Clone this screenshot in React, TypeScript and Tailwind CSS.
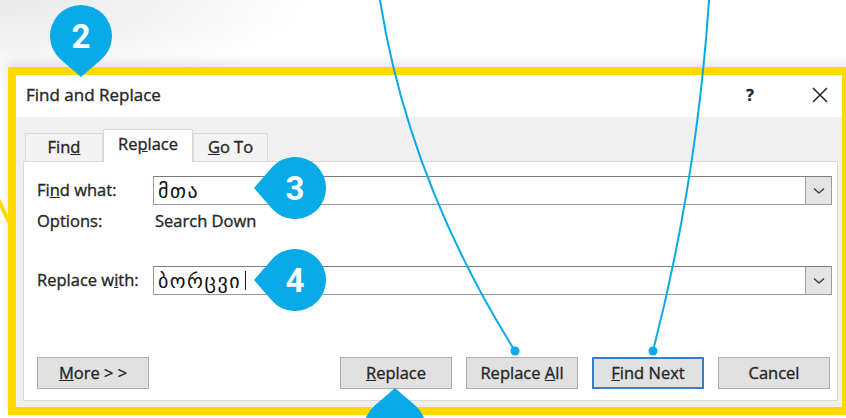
import React from "react";

const BLUE = "#0aaae8";

// Teardrop marker; circle centre at (cx, cy), tip pointing `dir`
function Pin({ cx, cy, dir, n }: { cx: number; cy: number; dir: "down" | "left" | "up"; n: string }) {
    const rot = dir === "down" ? 0 : dir === "left" ? 90 : 180;
    return (
        <div className="absolute" style={{ left: cx - 44, top: cy - 44, width: 88, height: 88 }}>
            <svg width="88" height="88" viewBox="-44 -44 88 88" className="absolute inset-0">
                <path d="M0 41 L20.3 23.4 A31 31 0 1 0 -20.3 23.4 Z" fill={BLUE} transform={`rotate(${rot})`} />
            </svg>
            <span className="absolute inset-0 flex items-center justify-center text-white text-[33px] font-bold leading-none font-['Roboto',sans-serif]">
                {n}
            </span>
        </div>
    );
}

function Combo({ children }: { children: React.ReactNode }) {
    return (
        <div className="flex-1 h-[29px] flex border border-[#9b9b9b] border-t-[#7f7f7f] bg-white">
            <div className="flex-1 flex items-center pl-[4px] text-[20px] tracking-[1.5px] text-[#111] [-webkit-text-stroke:0px] font-['DejaVu_Sans',sans-serif]">
                {children}
            </div>
            <div className="w-[26px] flex items-center justify-center bg-[#e4e4e4] border-l border-[#a3a3a3]">
                <svg width="12" height="8" viewBox="0 0 12 8">
                    <path d="M1 1.5 L6 6 L11 1.5" fill="none" stroke="#444" strokeWidth="1.6" />
                </svg>
            </div>
        </div>
    );
}

function Btn({ children, primary }: { children: React.ReactNode; primary?: boolean }) {
    return (
        <button
            className={
                "h-[32px] w-[112px] flex items-center justify-center bg-[#e1e1e1] text-[16.5px] text-[#262626] [-webkit-text-stroke:0.35px_#262626] " +
                (primary ? "border-2 border-[#3b7dc9]" : "border border-[#adadad]")
            }
        >
            {children}
        </button>
    );
}

export default function App() {
    return (
        <div className="relative w-[846px] h-[418px] overflow-hidden bg-white font-['Open_Sans','DejaVu_Sans',sans-serif]">
            <div className="absolute left-0 top-0 w-[320px] h-[90px] bg-[radial-gradient(ellipse_at_top_left,#e9e9e9,transparent_70%)]" />

            <div className="relative pt-[67px] pl-[8px]">
                <div className="w-[842px] border-8 border-[#ffd900] shadow-[0_-4px_10px_rgba(0,0,0,0.10)]">
                    {/* title bar */}
                    <div className="h-[42px] bg-white flex items-center pl-[10px] pb-[3px] text-[17px] text-[#262626] [-webkit-text-stroke:0.35px_#262626]">
                        <span className="flex-1">Find and Replace</span>
                        <span className="w-[20px] text-center font-bold text-[16px] mr-[52px]">?</span>
                        <svg width="16" height="16" viewBox="0 0 16 16" className="mr-[14px]">
                            <path d="M1 1 L15 15 M15 1 L1 15" stroke="#222" strokeWidth="1.5" />
                        </svg>
                    </div>

                    <div className="h-[290px] bg-[#f0f0f0] pt-[11px] pl-[7px] pr-[4px]">
                        {/* tabs */}
                        <div className="flex items-end ml-[2px] h-[33px] text-[16.5px] text-[#262626] [-webkit-text-stroke:0.35px_#262626]">
                            <div className="w-[78px] h-[28px] flex items-center justify-center bg-[#f3f3f3] border border-b-0 border-[#d9d9d9]">
                                <span>Fin<u>d</u></span>
                            </div>
                            <div className="relative z-10 w-[90px] h-[33px] -mb-px flex items-center justify-center bg-white border border-b-0 border-[#d9d9d9] pb-[3px]">
                                <span>Re<u>p</u>lace</span>
                            </div>
                            <div className="w-[75px] h-[28px] flex items-center justify-center bg-[#f3f3f3] border border-b-0 border-[#d9d9d9]">
                                <span><u>G</u>o To</span>
                            </div>
                        </div>

                        {/* panel */}
                        <div className="h-[240px] bg-white border border-[#d9d9d9] pl-[13px] pr-[5px] pt-[14px] text-[16.5px] text-[#262626] [-webkit-text-stroke:0.35px_#262626]">
                            <div className="flex items-center">
                                <span className="w-[116px]">Fi<u>n</u>d what:</span>
                                <Combo>მთა</Combo>
                            </div>
                            <div className="flex items-center h-[18px] mt-[7px]">
                                <span className="w-[118px]">Options:</span>
                                <span>Search Down</span>
                            </div>
                            <div className="flex items-center mt-[36px]">
                                <span className="w-[116px]">Replace w<u>i</u>th:</span>
                                <Combo>
                                    ბორცვი<span className="ml-[4px] w-px h-[19px] bg-[#111]" />
                                </Combo>
                            </div>
                            <div className="flex mt-[62px] pr-[2px]">
                                <Btn><span><u>M</u>ore &gt; &gt;</span></Btn>
                                <div className="ml-auto flex gap-[14px]">
                                    <Btn><span><u>R</u>eplace</span></Btn>
                                    <Btn><span>Replace <u>A</u>ll</span></Btn>
                                    <Btn primary><span><u>F</u>ind Next</span></Btn>
                                    <Btn>Cancel</Btn>
                                </div>
                            </div>
                        </div>
                    </div>
                </div>
            </div>

            {/* leader lines */}
            <svg width="846" height="418" className="absolute inset-0 pointer-events-none">
                <path d="M-2 199 L9 222" stroke="#ffd900" strokeWidth="4" fill="none" />
                <path d="M380 0 Q408.5 180.5 515 351" stroke={BLUE} strokeWidth="2" fill="none" />
                <path d="M709 0 Q697 180.5 653 351" stroke={BLUE} strokeWidth="2" fill="none" />
                <circle cx="515" cy="351" r="4.5" fill={BLUE} />
                <circle cx="653" cy="351" r="4.5" fill={BLUE} />
            </svg>

            <Pin cx={81} cy={36} dir="down" n="2" />
            <Pin cx={295} cy={188} dir="left" n="3" />
            <Pin cx={295} cy={280} dir="left" n="4" />
            <Pin cx={395} cy={429} dir="up" n="" />
        </div>
    );
}
